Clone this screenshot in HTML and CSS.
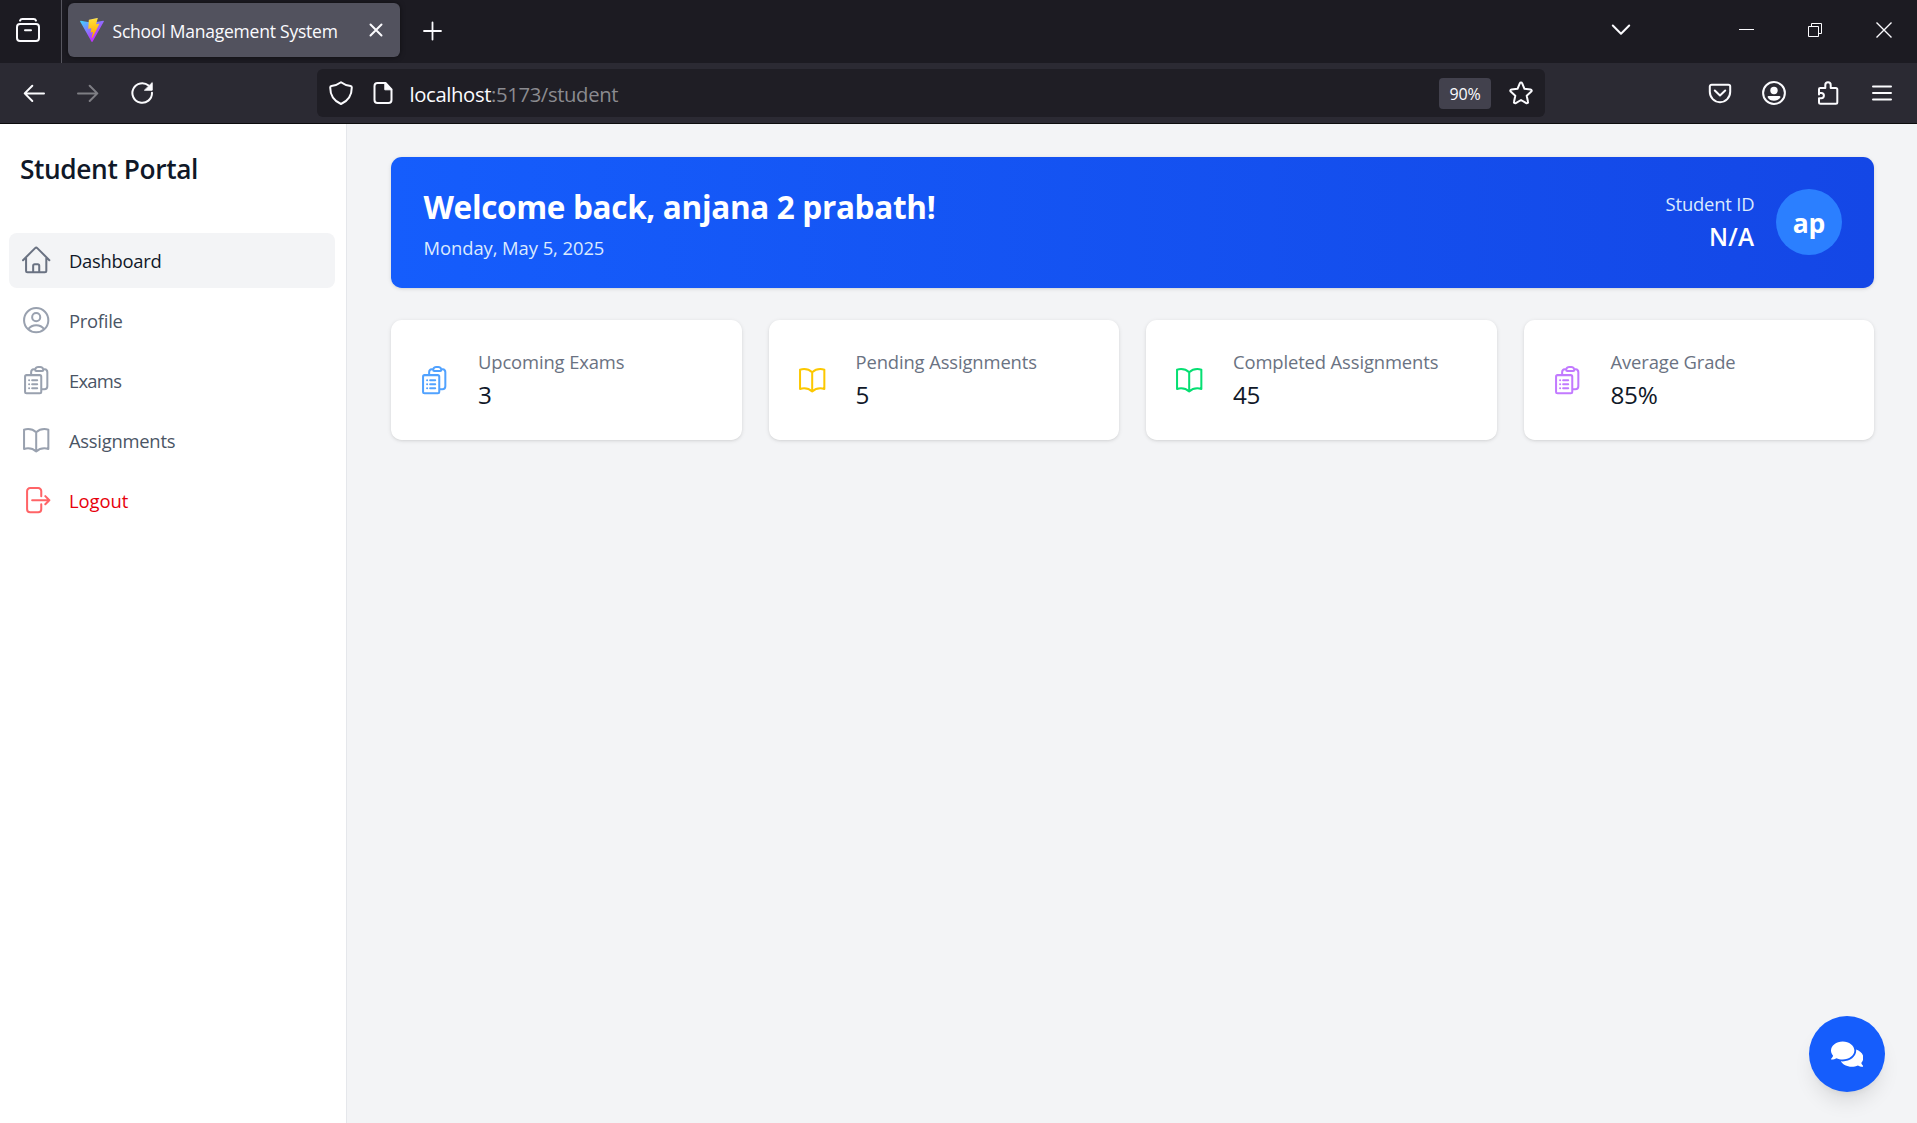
FILE: index.html
```
<!DOCTYPE html>
<html lang="en">
<head>
<meta charset="utf-8">
<title>School Management System</title>
<link rel="stylesheet" href="styles.css">
</head>
<body>
<svg class="defs" width="0" height="0" aria-hidden="true">
  <symbol id="clipboard" viewBox="0 0 24 24"><path d="M9 12h3.75M9 15h3.75M9 18h3.75m3 .75H18a2.25 2.25 0 0 0 2.25-2.25V6.108c0-1.135-.845-2.098-1.976-2.192a48.424 48.424 0 0 0-1.123-.08m-5.801 0c-.065.21-.1.433-.1.664 0 .414.336.75.75.75h4.5a.75.75 0 0 0 .75-.75 2.25 2.25 0 0 0-.1-.664m-5.8 0A2.251 2.251 0 0 1 13.5 2.25H15c1.012 0 1.867.668 2.15 1.586m-5.8 0c-.376.023-.75.05-1.124.08C9.095 4.01 8.25 4.973 8.25 6.108V8.25m0 0H4.875c-.621 0-1.125.504-1.125 1.125v11.25c0 .621.504 1.125 1.125 1.125h9.75c.621 0 1.125-.504 1.125-1.125V9.375c0-.621-.504-1.125-1.125-1.125H8.25ZM6.75 12h.008v.008H6.75V12Zm0 3h.008v.008H6.75V15Zm0 3h.008v.008H6.75V18Z"/></symbol>
  <symbol id="book" viewBox="0 0 24 24"><path d="M12 6.042A8.967 8.967 0 0 0 6 3.75c-1.052 0-2.062.18-3 .512v14.25A8.987 8.987 0 0 1 6 18c2.305 0 4.408.867 6 2.292m0-14.25a8.966 8.966 0 0 1 6-2.292c1.052 0 2.062.18 3 .512v14.25A8.987 8.987 0 0 0 18 18a8.967 8.967 0 0 0-6 2.292m0-14.25v14.25"/></symbol>
</svg>

<header class="browser">
  <div class="tabbar">
    <svg class="chrome-icon view-icon" viewBox="0 0 24 24"><rect x="1" y="6" width="22" height="17" rx="3"/><path d="M4 2.6Q4.6 1 6.4 1h11.2q1.8 0 2.4 1.6M9 12.2h6"/></svg>
    <div class="separator"></div>
    <div class="tab">
      <svg class="favicon" viewBox="0 0 256 257">
        <defs>
          <linearGradient id="vg" x1="-.828%" x2="57.636%" y1="7.652%" y2="78.411%"><stop offset="0" stop-color="#41d1ff"/><stop offset="1" stop-color="#bd34fe"/></linearGradient>
          <linearGradient id="vb" x1="43.376%" x2="50.316%" y1="2.242%" y2="89.03%"><stop offset="0" stop-color="#ffea83"/><stop offset=".083" stop-color="#ffdd35"/><stop offset="1" stop-color="#ffa800"/></linearGradient>
        </defs>
        <path fill="url(#vg)" d="M255.153 37.938L134.897 252.976c-2.483 4.44-8.862 4.466-11.382.048L.875 37.958c-2.746-4.814 1.371-10.646 6.827-9.67l120.385 21.517a6.537 6.537 0 0 0 2.322-.004l117.867-21.483c5.438-.991 9.574 4.796 6.877 9.62Z"/>
        <path fill="url(#vb)" d="M185.432.063L96.44 17.501a3.268 3.268 0 0 0-2.634 3.014l-5.474 92.456a3.268 3.268 0 0 0 3.997 3.378l24.777-5.718c2.318-.535 4.413 1.507 3.936 3.838l-7.361 36.047c-.495 2.426 1.782 4.5 4.151 3.78l15.304-4.649c2.372-.72 4.652 1.36 4.15 3.788l-11.698 56.621c-.732 3.542 3.979 5.473 5.943 2.437l1.313-2.028l72.516-144.72c1.215-2.423-.88-5.186-3.54-4.672l-25.505 4.922c-2.396.462-4.435-1.77-3.759-4.114l16.646-57.705c.677-2.35-1.37-4.583-3.769-4.113Z"/>
      </svg>
      <span class="tab-title">School Management System</span>
      <svg class="chrome-icon tab-close" viewBox="0 0 24 24"><path d="M6.5 6.5l11 11M17.5 6.5l-11 11"/></svg>
    </div>
    <svg class="chrome-icon new-tab" viewBox="0 0 24 24"><path d="M12.5 3.5v17M4 12h17"/></svg>
    <div class="window-controls">
      <svg class="chrome-icon" viewBox="0 0 24 24"><path d="M3.8 6.5l8.2 8.2 8.2-8.2"/></svg>
      <svg class="chrome-icon hairline minimize" viewBox="0 0 24 24"><path d="M4 10.5h15"/></svg>
      <svg class="chrome-icon hairline restore" viewBox="0 0 24 24"><path d="M5.5 7.5h10v10h-10zM8.5 7.5v-3h10v10h-3"/></svg>
      <svg class="chrome-icon hairline close" viewBox="0 0 24 24"><path d="M4.5 3.5l15 15M19.5 3.5l-15 15"/></svg>
    </div>
  </div>
  <div class="toolbar">
    <div class="nav-buttons">
      <svg class="chrome-icon" viewBox="0 0 24 24"><path d="M22 12.4H2.8M10.3 4.8l-7.6 7.6 7.6 7.6"/></svg>
      <svg class="chrome-icon disabled" viewBox="0 0 24 24"><path d="M2 12.4h19.2M13.7 4.8l7.6 7.6-7.6 7.6"/></svg>
      <svg class="chrome-icon" viewBox="0 0 24 24"><path d="M22 11.8A9.8 9.8 0 1 1 18.6 4.6"/><path class="solid" d="M22.2 2v7.2h-7.4z"/></svg>
    </div>
    <div class="urlbar">
      <svg class="chrome-icon shield" viewBox="0 0 24 24"><path d="M12 1.2C9 3.4 5.5 4.7 2.4 5.1c-.8.1-1.2.6-1.2 1.4C1.2 14 5 20 12 23c7-3 10.8-9 10.8-16.5 0-.8-.4-1.3-1.2-1.4C18.5 4.7 15 3.4 12 1.2Z"/></svg>
      <svg class="chrome-icon page" viewBox="0 0 24 24"><path d="M14.5 2H6.500a3 3 0 0 0-3 3v14a3 3 0 0 0 3 3h11a3 3 0 0 0 3-3V8.500Z"/><path class="solid" d="M13.8 2v6.8h6.700z"/></svg>
      <span class="url"><span class="host">localhost</span>:5173/student</span>
      <span class="zoom-level">90%</span>
      <svg class="chrome-icon star" viewBox="0 0 24 24"><path d="M10.9 2.2c.4-1 1.8-1 2.2 0l2.4 5.6 6 .6c1.2.1 1.6 1.4.8 2.2l-4.6 4.1 1.3 6c.3 1.1-.8 1.9-1.8 1.4L12 19l-5.200 3.100c-1 .5-2.100-.3-1.800-1.400l1.300-6-4.600-4.100c-.8-.8-.4-2.100.8-2.200l6-.6Z"/></svg>
    </div>
    <div class="actions">
      <svg class="chrome-icon" viewBox="0 0 24 24"><path d="M3.6 3.8h16.8c1 0 1.8.8 1.8 1.8v5.2c0 5.8-4.5 10.4-10.2 10.4S1.8 16.600 1.8 10.8V5.600c0-1 .8-1.8 1.8-1.8Z"/><path d="M6.8 9.500l5.200 5 5.200-5"/></svg>
      <svg class="chrome-icon" viewBox="0 0 24 24"><circle cx="12" cy="12" r="10.9"/><circle class="fill" cx="12" cy="9.5" r="3.7"/><path class="fill" d="M6.6 15.1h10.8q1.2 0 .9 1.1c-1 2.400-3.500 3.500-6.300 3.500s-5.300-1.100-6.300-3.500q-.3-1.100.9-1.100Z"/></svg>
      <svg class="chrome-icon puzzle" viewBox="0 0 24 24"><path d="M3 13.6v-5.500c0-.7.5-1.200 1.200-1.200h5.100V3.900a2.700 2.700 0 0 1 5.400 0v3h5.100c.9 0 1.500.6 1.500 1.500v12.900c0 .9-.6 1.500-1.500 1.500H4.500c-.9 0-1.500-.6-1.500-1.500V17.200h2.300a2.600 2.600 0 0 0 0-5.200H3"/></svg>
      <svg class="chrome-icon" viewBox="0 0 24 24"><path d="M3 5.500h18M3 12h18M3 18.500h18"/></svg>
    </div>
  </div>
</header>

<div class="app">
  <aside class="sidebar">
    <h1 class="brand">Student Portal</h1>
    <nav class="menu">
      <a class="item active"><svg class="icon" viewBox="0 0 24 24"><path d="m2.25 12 8.954-8.955c.44-.439 1.152-.439 1.591 0L21.75 12M4.5 9.75v10.125c0 .621.504 1.125 1.125 1.125H9.75v-4.875c0-.621.504-1.125 1.125-1.125h2.25c.621 0 1.125.504 1.125 1.125V21h4.125c.621 0 1.125-.504 1.125-1.125V9.75M8.25 21h8.25"/></svg><span>Dashboard</span></a>
      <a class="item"><svg class="icon" viewBox="0 0 24 24"><path d="M17.982 18.725A7.488 7.488 0 0 0 12 15.75a7.488 7.488 0 0 0-5.982 2.975m11.963 0a9 9 0 1 0-11.963 0m11.963 0A8.966 8.966 0 0 1 12 21a8.966 8.966 0 0 1-5.982-2.275M15 9.75a3 3 0 1 1-6 0 3 3 0 0 1 6 0Z"/></svg><span>Profile</span></a>
      <a class="item exams"><svg class="icon"><use href="#clipboard"/></svg><span>Exams</span></a>
      <a class="item"><svg class="icon"><use href="#book"/></svg><span>Assignments</span></a>
      <a class="item logout"><svg class="icon" viewBox="0 0 24 24"><path d="M15.75 9V5.25A2.25 2.25 0 0 0 13.5 3h-6a2.25 2.25 0 0 0-2.25 2.25v13.5A2.25 2.25 0 0 0 7.5 21h6a2.25 2.25 0 0 0 2.25-2.25V15m3 0 3-3m0 0-3-3m3 3H9"/></svg><span>Logout</span></a>
    </nav>
  </aside>

  <main class="content">
    <section class="banner">
      <div class="greeting">
        <h2 class="welcome">Welcome back, anjana 2 prabath!</h2>
        <p class="date">Monday, May 5, 2025</p>
      </div>
      <div class="student">
        <p class="student-label">Student ID</p>
        <p class="student-id">N/A</p>
      </div>
      <div class="avatar">ap</div>
    </section>
    <section class="stats">
      <article class="card"><svg class="icon blue"><use href="#clipboard"/></svg><div><p class="label">Upcoming Exams</p><p class="value">3</p></div></article>
      <article class="card"><svg class="icon yellow"><use href="#book"/></svg><div><p class="label">Pending Assignments</p><p class="value">5</p></div></article>
      <article class="card"><svg class="icon green"><use href="#book"/></svg><div><p class="label">Completed Assignments</p><p class="value">45</p></div></article>
      <article class="card"><svg class="icon purple"><use href="#clipboard"/></svg><div><p class="label">Average Grade</p><p class="value">85%</p></div></article>
    </section>
  </main>
</div>

<button class="chat" aria-label="Chat">
  <svg viewBox="0 0 576 512"><path d="M416 192c0-88.4-93.1-160-208-160S0 103.6 0 192c0 34.3 14.1 65.9 38 92-13.4 30.2-35.5 54.2-35.8 54.5-2.2 2.3-2.8 5.7-1.5 8.7S4.8 352 8 352c36.6 0 66.9-12.3 88.7-25 32.2 15.7 70.3 25 111.3 25 114.9 0 208-71.6 208-160zm122 220c23.9-26 38-57.7 38-92 0-66.9-53.5-124.2-129.3-148.1.9 6.6 1.3 13.3 1.3 20.1 0 105.9-107.7 192-240 192-10.8 0-21.3-.8-31.7-1.9C207.8 439.6 281.8 480 368 480c41 0 79.1-9.2 111.3-25 21.8 12.7 52.1 25 88.7 25 3.2 0 6.1-1.9 7.3-4.8 1.3-2.9.7-6.3-1.5-8.7-.3-.3-22.4-24.2-35.8-54.5z"/></svg>
</button>
</body>
</html>
```
FILE: styles.css
```
* { box-sizing: border-box; }

html, body { height: 100%; }

body {
  margin: 0;
  display: flex;
  flex-direction: column;
  overflow: hidden;
  background: #f3f4f6;
  font-family: "Open Sans", "Noto Sans", sans-serif;
  font-size: 18.4px;
  letter-spacing: -0.12px;
}

h1, h2, p { margin: 0; white-space: nowrap; }
svg { display: block; flex: none; }
.defs { position: absolute; }

/* Browser window */
.browser { flex: none; color: #fbfbfe; border-bottom: 1px solid #0c0c0d; }
.chrome-icon {
  width: 24px;
  height: 24px;
  fill: none;
  stroke: #fbfbfe;
  stroke-width: 2;
  stroke-linecap: round;
  stroke-linejoin: round;
}
.chrome-icon .fill { fill: #fbfbfe; stroke: none; }
.chrome-icon .solid { fill: #fbfbfe; stroke-width: 1; }
.hairline { stroke-width: 1; stroke-linecap: butt; stroke-linejoin: miter; }
.disabled { opacity: .4; }

.tabbar {
  display: flex;
  align-items: center;
  height: 63px;
  padding: 0 21px 1px 16px;
  background: #1c1b22;
}
.view-icon { margin-top: -2px; }
.separator { width: 1px; height: 63px; margin: 1px 6px 0 21px; background: #57565f; }
.tab {
  display: flex;
  align-items: center;
  width: 332px;
  height: 54px;
  margin-top: -2px;
  padding: 0 12px;
  border-radius: 6px;
  background: #52525e;
  box-shadow: 0 0 5px rgba(0, 0, 0, .5);
}
.favicon { width: 24px; height: 24px; }
.tab-title {
  flex: 1;
  margin: 1px 0 0 8.5px;
  font-size: 17.5px;
  letter-spacing: -.22px;
  white-space: nowrap;
}
.new-tab { margin-left: 20px; stroke-width: 1.8; }
.window-controls { display: flex; margin-left: auto; }
.minimize { margin-left: 102px; }
.restore { margin-left: 44px; }
.close { margin-left: 45px; stroke-width: 1.4; }

.toolbar {
  display: flex;
  align-items: center;
  height: 60px;
  padding: 0 23px 0 22px;
  background: #2b2a33;
}
.nav-buttons, .actions { display: flex; gap: 30px; }
.urlbar {
  display: flex;
  align-items: center;
  width: 1228px;
  height: 48px;
  margin-left: 163px;
  padding: 0 12px;
  border-radius: 6px;
  background: #1f1e25;
}
.page { margin-left: 18px; }
.url {
  flex: 1;
  margin: 2px 0 0 14.5px;
  color: #8b8b90;
  font-size: 20.3px;
  letter-spacing: -.38px;
}
.host { color: #fbfbfe; }
.zoom-level {
  width: 52px;
  height: 31px;
  margin: 1px 18px 0 0;
  border-radius: 4px;
  background: #42414d;
  font-size: 16px;
  line-height: 32px;
  text-align: center;
}
.actions { margin-left: 163px; }

/* Application */
.app { display: flex; flex: 1; }
.icon {
  width: 32.4px;
  height: 32.4px;
  fill: none;
  stroke: currentColor;
  stroke-width: 1.5;
  stroke-linecap: round;
  stroke-linejoin: round;
}

.sidebar {
  width: 347px;
  padding: 27px 11px 0 9px;
  border-right: 1px solid #e5e7eb;
  background: #fff;
}
.brand {
  padding-left: 11px;
  color: #101828;
  font-size: 26.3px;
  font-weight: 600;
  line-height: 37px;
  letter-spacing: -.4px;
}
.menu { display: flex; flex-direction: column; gap: 5px; margin-top: 45px; }
.item {
  display: flex;
  align-items: center;
  gap: 16.2px;
  height: 55px;
  padding-left: 11.3px;
  border-radius: 8px;
  color: #4a5565;
  letter-spacing: -.24px;
}
.item .icon { color: #99a1af; }
.item.active { background: #f3f4f6; color: #101828; }
.item.active .icon { color: #6a7282; }
.exams { letter-spacing: -.7px; }
.item.logout { color: #e7000b; letter-spacing: 0; }
.item.logout .icon { color: #ff6467; }

.content { flex: 1; padding: 33px 43px 0 44px; }
.banner {
  display: flex;
  height: 131px;
  padding: 32px 32px 0 32.5px;
  border-radius: 10.8px;
  background: linear-gradient(to right, #155dfc, #1447e6);
  box-shadow: 0 1px 4px rgba(0, 0, 0, .1), 0 1px 3px -1px rgba(0, 0, 0, .1);
  color: #fff;
}
.greeting { flex: 1; }
.welcome { font-size: 31.5px; font-weight: 700; line-height: 36px; letter-spacing: -.33px; }
.date { margin-top: 9px; line-height: 27px; color: #dbeafe; letter-spacing: -.06px; }
.student { margin-right: 21.5px; text-align: right; }
.student-label { margin-top: 1px; line-height: 27px; color: #dbeafe; letter-spacing: -.17px; }
.student-id { margin-top: 4px; font-size: 24.3px; font-weight: 600; line-height: 32px; letter-spacing: .3px; }
.avatar {
  width: 66px;
  height: 66px;
  border-radius: 50%;
  background: #2b7fff;
  font-size: 26.5px;
  font-weight: 700;
  line-height: 69px;
  text-align: center;
}

.stats { display: grid; grid-template-columns: repeat(4, 1fr); gap: 27px; margin-top: 32px; }
.card {
  display: flex;
  align-items: center;
  gap: 27.6px;
  height: 120px;
  padding-left: 27px;
  border-radius: 10.8px;
  background: #fff;
  box-shadow: 0 1px 4px rgba(0, 0, 0, .1), 0 1px 3px -1px rgba(0, 0, 0, .1);
}
.label { margin-top: -2px; line-height: 27px; color: #6a7282; }
.value { margin-top: 4px; color: #101828; font-size: 24.3px; line-height: 32px; letter-spacing: -.3px; }
.blue { color: #51a2ff; }
.yellow { color: #fcc800; }
.green { color: #05df72; }
.purple { color: #c27aff; }

/* Floating chat button, pinned over the page */
.chat {
  position: fixed;
  right: 32px;
  bottom: 31px;
  display: grid;
  place-items: center;
  width: 76px;
  height: 76px;
  padding: 0;
  border: 0;
  border-radius: 50%;
  background: #155dfc;
  box-shadow: 0 13.5px 20px -4px rgba(0, 0, 0, .1), 0 5.4px 8px -5.4px rgba(0, 0, 0, .1);
}
.chat svg { width: 32.4px; height: 32.4px; fill: #fff; }
```
